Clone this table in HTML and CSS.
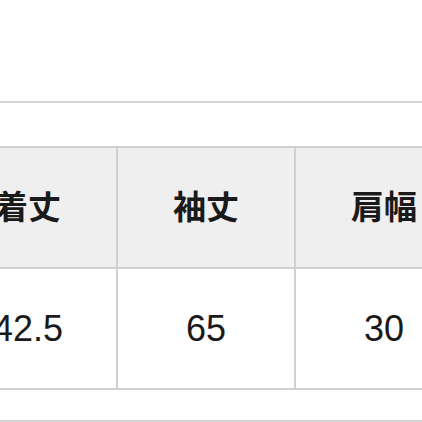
FILE: index.html
```html
<!DOCTYPE html>
<html lang="ja">
<head>
<meta charset="utf-8">
<link rel="stylesheet" href="styles.css">
</head>
<body>
<div class="page">
  <div class="rule rule-top"></div>
  <table class="size-table">
    <thead>
      <tr><th>着丈</th><th>袖丈</th><th>肩幅</th></tr>
    </thead>
    <tbody>
      <tr><td>42.5</td><td>65</td><td>30</td></tr>
    </tbody>
  </table>
  <div class="rule rule-bottom"></div>
</div>
</body>
</html>
```
FILE: styles.css
```css
html, body {
  margin: 0;
  padding: 0;
  background: #ffffff;
  overflow: hidden;
}
.page {
  width: 422px;
  height: 422px;
  overflow: hidden;
}
.rule {
  height: 2px;
  background: #d4d4d4;
}
.rule-top {
  margin-top: 101px;
}
.size-table {
  margin-top: 43px;
  margin-left: -62px;
  width: 536px;
  border-collapse: collapse;
  table-layout: fixed;
  font-family: "Liberation Sans", "Noto Sans CJK JP", sans-serif;
  color: #1a1a1a;
}
.size-table th,
.size-table td {
  border: 2px solid #d0d0d0;
  text-align: center;
  vertical-align: middle;
  padding: 0;
  height: 119px;
  width: 176px;
}
.size-table th {
  background: #efefef;
  font-family: "Noto Sans CJK JP", sans-serif;
  font-weight: 700;
  font-size: 33px;
  line-height: 1;
  height: 115px;
  padding-bottom: 4px;
}
.size-table td {
  background: #ffffff;
  font-size: 36px;
  font-weight: 400;
}
.rule-bottom {
  margin-top: 30px;
}
```
